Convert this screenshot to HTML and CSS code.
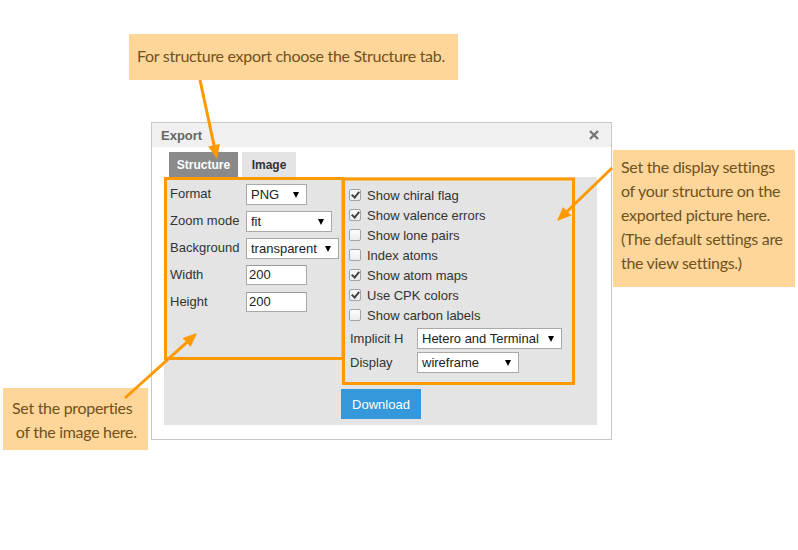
FILE: index.html
```html
<!DOCTYPE html>
<html>
<head>
<meta charset="utf-8">
<link rel="stylesheet" href="styles.css">
</head>
<body>
<div class="stage">
  <div class="dialog">
    <div class="dlg-head">
      <span class="dlg-title">Export</span>
      <svg class="close" width="10" height="10" viewBox="0 0 10 10"><path d="M1 1 L9 9 M9 1 L1 9" stroke="#777" stroke-width="2.4" stroke-linecap="butt"/></svg>
    </div>
    <div class="dlg-body">
      <div class="tabs">
        <div class="tab active t-structure">Structure</div>
        <div class="tab t-image">Image</div>
      </div>
      <div class="panel">
        <div class="col-left">
          <div class="frow"><span class="flabel">Format</span><div class="sel w61"><span>PNG</span><i class="caret"></i></div></div>
          <div class="frow"><span class="flabel">Zoom mode</span><div class="sel w86"><span>fit</span><i class="caret"></i></div></div>
          <div class="frow"><span class="flabel">Background</span><div class="sel w93"><span>transparent</span><i class="caret"></i></div></div>
          <div class="frow"><span class="flabel">Width</span><div class="inp">200</div></div>
          <div class="frow"><span class="flabel">Height</span><div class="inp">200</div></div>
        </div>
        <div class="col-right">
          <div class="crow"><span class="cb on"></span>Show chiral flag</div>
          <div class="crow"><span class="cb on"></span>Show valence errors</div>
          <div class="crow"><span class="cb"></span>Show lone pairs</div>
          <div class="crow"><span class="cb"></span>Index atoms</div>
          <div class="crow"><span class="cb on"></span>Show atom maps</div>
          <div class="crow"><span class="cb on"></span>Use CPK colors</div>
          <div class="crow"><span class="cb"></span>Show carbon labels</div>
          <div class="srow first"><span class="slabel">Implicit H</span><div class="sel w145"><span>Hetero and Terminal</span><i class="caret"></i></div></div>
          <div class="srow"><span class="slabel">Display</span><div class="sel w102"><span>wireframe</span><i class="caret"></i></div></div>
          <div class="btn">Download</div>
        </div>
      </div>
    </div>
  </div>

  <div class="note note-top">For structure export choose the Structure tab.</div>
  <div class="note note-right">Set the display settings<br>of your structure on the<br>exported picture here.<br>(The default settings are<br>the view settings.)</div>
  <div class="note note-left">Set the properties<br>&nbsp;of the image here.</div>

  <svg class="overlay" width="798" height="550" viewBox="0 0 798 550">
    <g fill="none" stroke="#ff9900" stroke-width="3">
      <rect x="165.5" y="178.5" width="177.5" height="180"/>
      <rect x="343.5" y="179" width="230" height="204.5"/>
      <line x1="200" y1="80" x2="214.2" y2="146"/>
      <line x1="612" y1="168" x2="567" y2="211.5"/>
      <line x1="125" y1="398" x2="186.8" y2="342.3"/>
    </g>
    <g fill="#ff9900">
      <polygon points="217,159 219.9,144 208.2,146.6"/>
      <polygon points="557,221 571.3,215.6 562.9,207"/>
      <polygon points="197,333 190.6,346.9 182.6,338"/>
    </g>
  </svg>
</div>
</body>
</html>
```
FILE: styles.css
```css
html, body {
  margin: 0;
  padding: 0;
  background: #fff;
}
.stage {
  position: relative;
  width: 798px;
  height: 550px;
  overflow: hidden;
  font-family: "Liberation Sans", Arial, sans-serif;
  font-size: 13px;
  color: #333;
}
.dialog {
  position: absolute;
  left: 151px;
  top: 122px;
  width: 461px;
  height: 318px;
  box-sizing: border-box;
  border: 1px solid #c8c8c8;
  background: #fff;
}
.dlg-head {
  height: 24px;
  background: #f0f0f0;
  display: flex;
  align-items: center;
  justify-content: space-between;
  padding: 0 12px 0 9px;
}
.dlg-title {
  font-weight: bold;
  font-size: 13px;
  color: #666;
}
.close {
  display: block;
}
.dlg-body {
  padding: 5px 14px 0 12px;
}
.tabs {
  display: flex;
  gap: 4px;
  margin-left: 5px;
  height: 25px;
}
.tab {
  height: 25px;
  line-height: 26px;
  text-align: center;
  font-weight: bold;
  font-size: 12px;
  background: #e4e4e4;
  color: #333;
}
.t-structure { width: 69px; }
.t-image { width: 54px; }
.tab.active {
  background: #8a8a8a;
  color: #fff;
}
.panel {
  display: flex;
  width: 433px;
  height: 248px;
  background: #e4e4e4;
}
.col-left {
  width: 171px;
  padding: 7px 0 0 6px;
  display: flex;
  flex-direction: column;
  gap: 6px;
}
.frow {
  display: flex;
  align-items: center;
  height: 21px;
}
.flabel {
  width: 76px;
  flex: none;
  margin-top: -2px;
}
.sel {
  height: 21px;
  box-sizing: border-box;
  border: 1px solid #a9a9a9;
  background: #fff;
  display: flex;
  align-items: center;
  justify-content: space-between;
  padding: 0 7px 0 4px;
  color: #222;
  white-space: nowrap;
}
.caret {
  display: block;
  width: 0;
  height: 0;
  border-left: 3px solid transparent;
  border-right: 3px solid transparent;
  border-top: 6px solid #000;
}
.w61 { width: 61px; }
.w86 { width: 86px; }
.w93 { width: 93px; }
.w145 { width: 145px; }
.w102 { width: 102px; }
.inp {
  width: 61px;
  height: 20px;
  align-self: flex-start;
  box-sizing: border-box;
  border: 1px solid #a9a9a9;
  border-top-color: #999;
  background: #fff;
  padding-left: 2px;
  line-height: 18px;
  color: #222;
}
.col-right {
  flex: 1;
  padding-top: 8px;
  display: flex;
  flex-direction: column;
}
.crow {
  height: 20px;
  display: flex;
  align-items: center;
  padding-left: 8px;
}
.cb {
  width: 12px;
  height: 12px;
  box-sizing: border-box;
  border: 1px solid #a3a3a3;
  border-radius: 2px;
  background: linear-gradient(#fdfdfd, #ececec);
  margin-right: 6px;
  position: relative;
  flex: none;
}
.cb.on::after {
  content: "";
  position: absolute;
  left: 3px;
  top: 0px;
  width: 3px;
  height: 6px;
  border-right: 2px solid #444;
  border-bottom: 2px solid #444;
  transform: rotate(40deg);
}
.srow {
  display: flex;
  align-items: center;
  padding-left: 9px;
  margin-top: 3px;
}
.srow.first {
  margin-top: 3px;
}
.slabel {
  width: 67px;
  flex: none;
}
.btn {
  margin-top: 16px;
  width: 80px;
  height: 30px;
  background: #3498db;
  color: #fff;
  display: flex;
  align-items: center;
  justify-content: center;
}
.note {
  position: absolute;
  background: #fed699;
  color: #6e5220;
  font-family: Lato, "Open Sans", sans-serif;
  font-size: 16px;
  letter-spacing: -0.3px;
  line-height: 24px;
  box-sizing: border-box;
}
.note-top {
  left: 129px;
  top: 34px;
  width: 329px;
  height: 46px;
  padding: 10px 0 0 8px;
}
.note-right {
  left: 613px;
  top: 150px;
  width: 182px;
  height: 137px;
  padding: 5px 0 0 8px;
}
.note-left {
  left: 3px;
  top: 388px;
  width: 145px;
  height: 62px;
  padding: 8px 0 0 9px;
}
.overlay {
  position: absolute;
  left: 0;
  top: 0;
  pointer-events: none;
}
```
